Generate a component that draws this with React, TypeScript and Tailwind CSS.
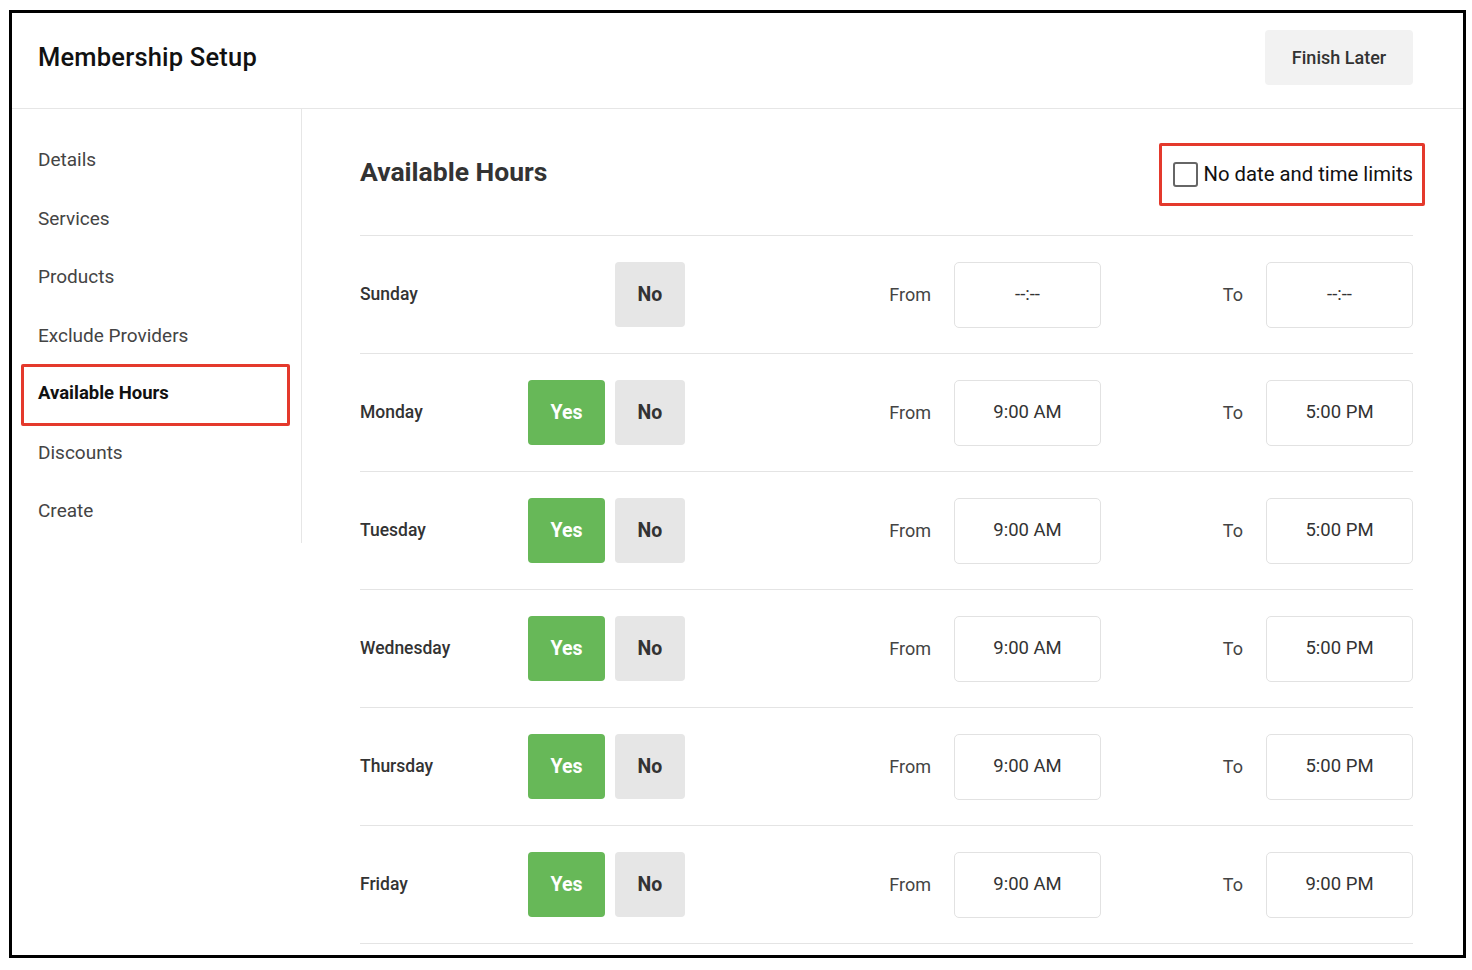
import React from "react";

const NAV_ITEMS = [
  "Details",
  "Services",
  "Products",
  "Exclude Providers",
  "Available Hours",
  "Discounts",
  "Create",
];

type Day = { name: string; open: boolean; from: string; to: string };

const DAYS: Day[] = [
  { name: "Sunday", open: false, from: "--:--", to: "--:--" },
  { name: "Monday", open: true, from: "9:00 AM", to: "5:00 PM" },
  { name: "Tuesday", open: true, from: "9:00 AM", to: "5:00 PM" },
  { name: "Wednesday", open: true, from: "9:00 AM", to: "5:00 PM" },
  { name: "Thursday", open: true, from: "9:00 AM", to: "5:00 PM" },
  { name: "Friday", open: true, from: "9:00 AM", to: "9:00 PM" },
];

function TimeBox({ value }: { value: string }) {
  return (
    <div className="w-[147px] h-[66px] flex items-center justify-center rounded-[5px] border border-[#e2e2e2] text-[18.5px] text-[#333]">
      {value}
    </div>
  );
}

function DayRow({ day }: { day: Day }) {
  return (
    <div className="h-[118px] flex items-center border-b border-[#e4e4e4]">
      <div className="w-[168px] text-[17.5px] font-medium text-[#333]">{day.name}</div>
      <div className="w-[77px] h-[65px]">
        {day.open && (
          <button className="w-full h-full rounded-[4px] bg-[#67b858] text-white text-[19.5px] font-bold">
            Yes
          </button>
        )}
      </div>
      <button className="ml-[10px] w-[70px] h-[65px] rounded-[4px] bg-[#e6e6e6] text-[#333] text-[19.5px] font-bold">
        No
      </button>
      <div className="w-[416px] flex items-center justify-end gap-[23px]">
        <span className="text-[18px] text-[#444]">From</span>
        <TimeBox value={day.from} />
      </div>
      <div className="flex-1 flex items-center justify-end gap-[23px]">
        <span className="text-[18px] text-[#444]">To</span>
        <TimeBox value={day.to} />
      </div>
    </div>
  );
}

export default function App() {
  return (
    <div
      className="w-[1472px] h-[970px] bg-white pt-[10px] pl-[9px]"
      style={{ fontFamily: "Roboto, 'Noto Sans', sans-serif" }}
    >
      <div className="w-[1457px] h-[948px] border-[3px] border-black overflow-hidden flex flex-col">
        {/* Header */}
        <header className="h-[96px] shrink-0 flex items-center justify-between pl-[26px] pr-[50px] pb-[6px] border-b border-[#e6e6e6]">
          <h1 className="text-[25.5px] font-medium text-[#111] tracking-[0.2px]">Membership Setup</h1>
          <button className="w-[148px] h-[55px] rounded-[4px] bg-[#f2f2f2] text-[18px] font-medium text-[#333]">
            Finish Later
          </button>
        </header>

        <div className="flex flex-1 min-h-0">
          {/* Sidebar */}
          <nav className="w-[290px] shrink-0 self-start pt-[22px] pb-[2px] border-r border-[#e6e6e6]">
            {NAV_ITEMS.map((item) => {
              const active = item === "Available Hours";
              return (
                <div key={item} className="relative h-[58.5px] flex items-center pl-[26px]">
                  {active && (
                    <span className="absolute left-[9px] right-[11px] -top-[1px] -bottom-[2px] border-[3px] border-[#e4392c] rounded-[2px]" />
                  )}
                  <span
                    className={
                      active
                        ? "text-[18.5px] font-bold text-[#111]"
                        : "text-[19px] text-[#444]"
                    }
                  >
                    {item}
                  </span>
                </div>
              );
            })}
          </nav>

          {/* Main */}
          <main className="flex-1 pl-[58px] pr-[50px]">
            <div className="h-[127px] flex items-center justify-between border-b border-[#e4e4e4]">
              <h2 className="text-[26.5px] font-bold text-[#333]">Available Hours</h2>
              <label className="mt-[4px] -mr-[12px] h-[63px] flex items-center gap-[6px] pl-[11px] pr-[9px] border-[3px] border-[#e4392c] rounded-[2px]">
                <span className="w-[25px] h-[25px] rounded-[3px] border-2 border-[#666] bg-white" />
                <span className="text-[20.3px] text-[#111]">No date and time limits</span>
              </label>
            </div>
            {DAYS.map((day) => (
              <DayRow key={day.name} day={day} />
            ))}
          </main>
        </div>
      </div>
    </div>
  );
}
